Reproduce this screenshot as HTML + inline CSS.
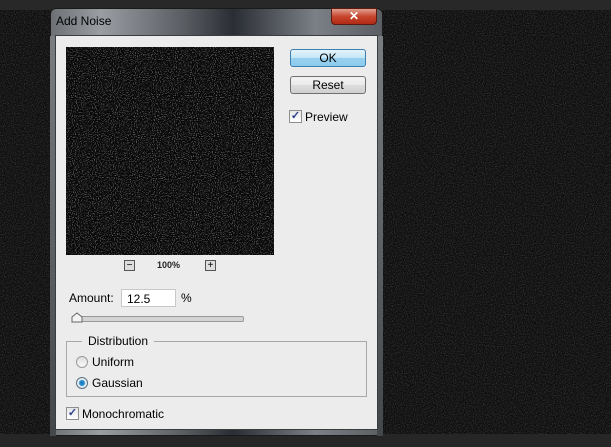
<!DOCTYPE html>
<html><head><style>
body{margin:0;width:611px;height:447px;overflow:hidden;background:#101010;font-family:"Liberation Sans",sans-serif;position:relative}
.a{position:absolute}
.btn{position:absolute;border:1px solid #707070;border-radius:3px;background:linear-gradient(#f2f2f2,#ebebeb 50%,#dddddd 51%,#cfcfcf);font-size:12px;text-align:center;line-height:16px;color:#000}
.t{position:absolute;font-size:12px;color:#000}
.cb{position:absolute;width:11px;height:11px;border:1px solid #8e8f8f;background:linear-gradient(#e6e6e6,#fff);font-size:11px;line-height:11px;text-align:center;color:#2b3e8c;font-weight:bold}
</style></head><body>
<svg class="a" style="left:0;top:0" width="611" height="447"><filter id="n"><feTurbulence type="fractalNoise" baseFrequency="0.9" numOctaves="1" seed="3"/><feColorMatrix values="0 0 0 0 0.35 0 0 0 0 0.35 0 0 0 0 0.35 0 0 0 -3 1.7"/></filter><rect width="611" height="447" fill="#0f0f0f"/><rect width="611" height="447" filter="url(#n)" opacity="0.25"/></svg>
<div class="a" style="left:0;top:0;width:611px;height:10px;background:#282828"></div>
<div class="a" style="left:0;top:434px;width:611px;height:13px;background:#262626"></div>
<div class="a" style="left:50px;top:8px;width:333px;height:428px;border-radius:6px 6px 4px 4px;background:linear-gradient(90deg,#6d7074,#9a9ea3 15%,#5a5e63 40%,#2a2e34 55%,#7b8086 80%,#5b5f64);border:1px solid #1a1a1a;box-sizing:border-box"></div>
<div class="a" style="left:50px;top:36px;width:6px;height:400px;background:linear-gradient(#7a7d80,#44474a)"></div>
<div class="a" style="left:377px;top:36px;width:6px;height:400px;background:linear-gradient(#7a7d80,#44474a)"></div>
<div class="t" style="left:56px;top:14px;font-size:12px;color:#000">Add Noise</div>
<div class="a" style="left:331px;top:8px;width:46px;height:17px;border-radius:0 0 4px 4px;background:linear-gradient(#e0a090,#c8452d 50%,#b02a14);border:1px solid #5a1a10;box-sizing:border-box;color:#fff;font-weight:bold;font-size:12px;text-align:center;line-height:15px">✕</div>
<div class="a" style="left:55px;top:35px;width:323px;height:395px;background:#ececec;border:1px solid #3a3d40;box-sizing:border-box"></div>
<svg class="a" style="left:66px;top:47px" width="208" height="208"><filter id="m"><feTurbulence type="fractalNoise" baseFrequency="0.95" numOctaves="1" seed="7"/><feColorMatrix values="0 0 0 0 0.7 0 0 0 0 0.7 0 0 0 0 0.7 0 0 0 -5 2.4"/></filter><rect width="208" height="208" fill="#080808"/><rect width="208" height="208" filter="url(#m)" opacity="0.45"/></svg>
<div class="btn" style="left:290px;top:49px;width:74px;height:16px;border-color:#3c7fb1;background:linear-gradient(#e5f4fc,#c4e5f6 50%,#98d1ef 51%,#8ccbed)">OK</div>
<div class="btn" style="left:290px;top:76px;width:74px;height:16px">Reset</div>
<div class="cb" style="left:289px;top:110px">✓</div>
<div class="t" style="left:305px;top:110px">Preview</div>
<div class="a" style="left:124px;top:260px;width:9px;height:9px;border:1px solid #555;background:#ddd;font-size:10px;line-height:9px;text-align:center">−</div>
<div class="t" style="left:157px;top:260px;font-size:9px;font-weight:bold;color:#222">100%</div>
<div class="a" style="left:205px;top:260px;width:9px;height:9px;border:1px solid #555;background:#ddd;font-size:10px;line-height:9px;text-align:center">+</div>
<div class="t" style="left:69px;top:291px">Amount:</div>
<div class="a" style="left:121px;top:289px;width:55px;height:18px;background:#fff;border:1px solid #c8c8c8;box-sizing:border-box"></div>
<div class="t" style="left:127px;top:292px">12.5</div>
<div class="t" style="left:181px;top:291px">%</div>
<div class="a" style="left:72px;top:316px;width:170px;height:4px;border:1px solid #999;border-radius:2px;background:#d4d4d4"></div>
<svg class="a" style="left:71px;top:312px" width="12" height="11"><path d="M1 10 L1 5 L6 1 L11 5 L11 10 Z" fill="#f4f4f4" stroke="#666"/></svg>
<div class="a" style="left:66px;top:341px;width:301px;height:56px;border:1px solid #a8a8a8;box-sizing:border-box"></div>
<div class="t" style="left:82px;top:334px;background:#ececec;padding:0 6px">Distribution</div>
<div class="a" style="left:76px;top:356px;width:10px;height:10px;border:1px solid #9a9a9a;border-radius:50%;background:linear-gradient(#ddd,#fafafa)"></div>
<div class="t" style="left:92px;top:355px">Uniform</div>
<div class="a" style="left:76px;top:377px;width:10px;height:10px;border:1px solid #5a6f80;border-radius:50%;background:radial-gradient(circle,#1a75b8 0,#2a8fd0 2.5px,#e8eef3 3.5px)"></div>
<div class="t" style="left:92px;top:376px">Gaussian</div>
<div class="cb" style="left:66px;top:407px">✓</div>
<div class="t" style="left:82px;top:407px">Monochromatic</div>
</body></html>
